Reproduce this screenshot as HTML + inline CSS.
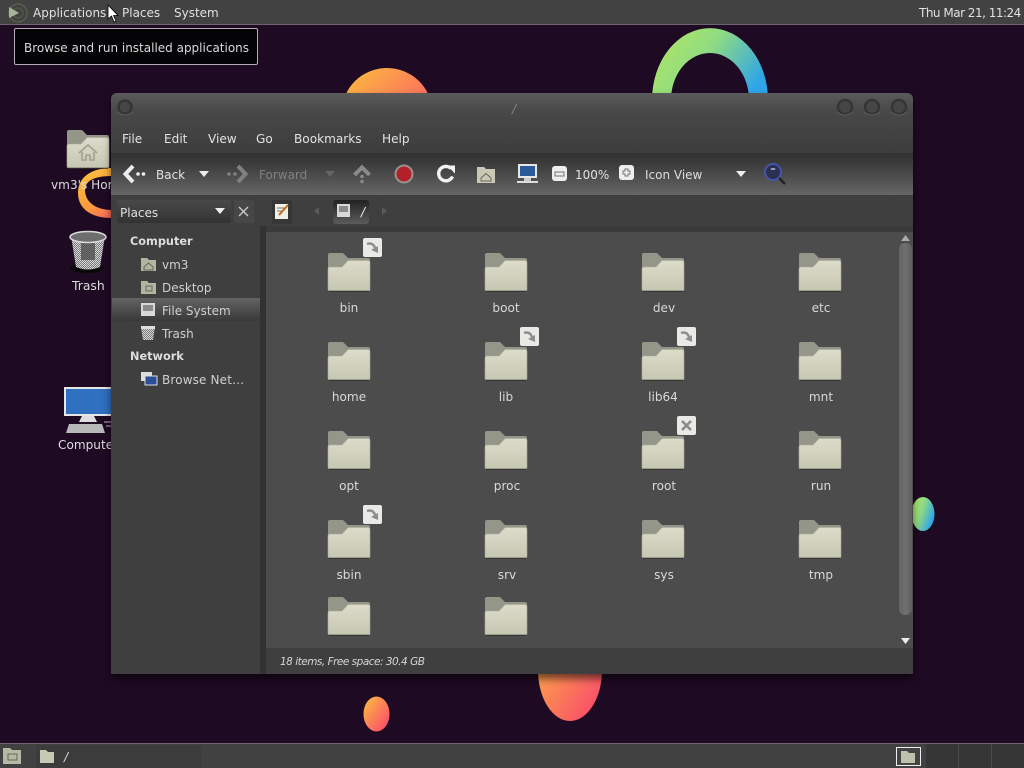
<!DOCTYPE html>
<html><head><meta charset="utf-8">
<style>
html,body{margin:0;padding:0;width:1024px;height:768px;overflow:hidden;background:#1f0a24;font-family:"DejaVu Sans","Liberation Sans",sans-serif;font-size:12px;color:#e0e0e0}
body{filter:blur(.35px)}
.a{position:absolute;white-space:nowrap}
.lb{position:absolute;width:120px;text-align:center;color:#d8d8d8;font-size:12.1px;line-height:16px}
.mn{position:absolute;top:131px;color:#e2e2e2;font-size:12.1px;line-height:16px}
.sd{position:absolute;left:162px;color:#d0d0d0;font-size:12px;line-height:16px}
.tb{position:absolute;top:167px;font-size:12px;line-height:16px;color:#e2e2e2}
</style></head><body>
<svg width="0" height="0" style="position:absolute"><defs>
<linearGradient id="fb" x1="0" y1="0" x2="0" y2="1"><stop offset="0" stop-color="#dddccb"/><stop offset="1" stop-color="#c6c7b2"/></linearGradient>
<symbol id="folder" viewBox="0 0 44 40">
<path d="M1 3Q1 1 3 1H16L21 6H41Q43 6 43 8V17H1Z" fill="#94968a"/>
<path d="M1 17Q1 15 3 15H15L21 8.500H41Q43 8.500 43 10.500V37Q43 39 41 39H3Q1 39 1 37Z" fill="url(#fb)" stroke="#a9aa97" stroke-width=".6"/>
<path d="M2 39.300H42" stroke="#2e2e2a" stroke-width="1"/>
</symbol>
<symbol id="link" viewBox="0 0 19 19"><rect width="19" height="19" rx="2" fill="#e9e9e5"/><path d="M4 6Q10 4 12 10" fill="none" stroke="#8e8e8e" stroke-width="2.400"/><path d="M8 12L15 15L15 8Z" fill="#8e8e8e"/></symbol>
</defs></svg>

<!-- wallpaper -->
<svg class="a" style="left:0;top:0" width="1024" height="768">
<defs>
<linearGradient id="org" x1="0" y1="0" x2="1" y2="1"><stop offset="0" stop-color="#fdc13e"/><stop offset="1" stop-color="#f9406f"/></linearGradient>
<linearGradient id="org2" gradientUnits="userSpaceOnUse" x1="80" y1="170" x2="115" y2="220"><stop offset="0" stop-color="#fcc53c"/><stop offset=".6" stop-color="#fa9a3e"/><stop offset="1" stop-color="#f55a63"/></linearGradient>
<linearGradient id="grn" x1="0" y1="0" x2="1" y2=".5"><stop offset="0" stop-color="#b6e85e"/><stop offset=".5" stop-color="#90db82"/><stop offset="1" stop-color="#2fa5e8"/></linearGradient>
<pattern id="mesh" width="2" height="2" patternUnits="userSpaceOnUse"><rect width="2" height="2" fill="#d6d6d6"/><rect width="1" height="1" fill="#7a7a7a"/><rect x="1" y="1" width="1" height="1" fill="#7a7a7a"/></pattern>
</defs>
<rect width="1024" height="768" fill="#1f0a24"/>
<ellipse cx="387" cy="112" rx="45" ry="44" fill="url(#org)"/>
<path fill-rule="evenodd" d="M652 100A58 72 0 0 1 768 100V110H652ZM671 100V110H749V100A39 47 0 0 0 671 100Z" fill="url(#grn)"/>
<ellipse cx="570" cy="670" rx="32" ry="51" fill="url(#org)"/>
<ellipse cx="376.500" cy="714" rx="13" ry="17.500" fill="url(#org)"/>
<ellipse cx="923" cy="514" rx="11.500" ry="17" fill="url(#grn)"/>
<path fill-rule="evenodd" d="M78 193C78 178 90 168 112 168V218C90 218 78 208 78 193ZM85 190C85 202 96 210 112 210V176C96 176 85 180 85 190Z" fill="url(#org2)"/>
</svg>

<!-- desktop icons -->
<svg class="a" style="left:66px;top:129px" width="44" height="40" viewBox="0 0 44 40"><use href="#folder" width="44" height="40"/><path d="M13 24L22 16L31 24M16 23V31H20V26H24V31H28V23" fill="none" stroke="#a0a18f" stroke-width="1.600"/></svg>
<div class="a" style="left:51px;top:178px;color:#dcdcdc;font-size:12.1px">vm3's Hor</div>
<svg class="a" style="left:68px;top:229px" width="40" height="44" viewBox="0 0 40 44">
<ellipse cx="19" cy="39" rx="17" ry="5" fill="#090909"/><path d="M3 7L8 38Q20 43 32 38L37 7Z" fill="url(#mesh)"/><rect x="13" y="14" width="14" height="17" fill="#4a4a4a" opacity=".75"/><ellipse cx="20" cy="8" rx="18" ry="5.500" fill="#6e6e6e" stroke="#dcdcdc" stroke-width="1.500"/></svg>
<div class="a" style="left:72px;top:278px;color:#dcdcdc;font-size:12.4px">Trash</div>
<svg class="a" style="left:64px;top:387px" width="47" height="47" viewBox="0 0 47 47">
<rect x="0" y="0" width="47" height="29" fill="#e6e6e6"/><rect x="2" y="2" width="45" height="25" fill="#2f70c0"/><path d="M18 29H30L33 35H15Z" fill="#ddd"/><path d="M5 37H38L41 46H2Z" fill="#b8b8b8"/><path d="M40 35H47M42 39H47" stroke="#bbb"/></svg>
<div class="a" style="left:58px;top:438px;color:#dcdcdc;font-size:12.1px">Compute</div>

<!-- top panel -->
<div class="a" style="left:0;top:0;width:1024px;height:24px;background:#424242;border-bottom:1px solid #6d6470"></div>
<svg class="a" style="left:7px;top:2px" width="22" height="21" viewBox="0 0 22 21"><circle cx="11" cy="11" r="9" fill="none" stroke="#55604a" stroke-width="1.500"/><circle cx="11" cy="11" r="5" fill="none" stroke="#55604a"/><path d="M2 5L12 11L2 16Z" fill="#a8b596"/></svg>
<div class="a" style="left:33px;top:5px;font-size:12px;line-height:16px">Applications</div>
<div class="a" style="left:122px;top:5px;font-size:12px;line-height:16px">Places</div>
<div class="a" style="left:174px;top:5px;font-size:12px;line-height:16px">System</div>
<div class="a" style="left:919px;top:5px;font-size:12px;line-height:16px;letter-spacing:-.5px">Thu Mar 21, 11:24</div>
<svg class="a" style="left:107px;top:4px;z-index:9" width="12" height="19" viewBox="0 0 12 19"><path d="M1 1V15L4.500 12L7 18L9 17L6.500 11.500H11Z" fill="#fff" stroke="#000" stroke-width=".8"/></svg>

<!-- tooltip -->
<div class="a" style="left:14px;top:28px;width:242px;height:35px;background:#040305;border:1px solid #b5adb6;border-radius:2px;z-index:8"></div>
<div class="a" style="left:24px;top:40px;font-size:12px;line-height:16px;color:#dadada;z-index:9">Browse and run installed applications</div>

<!-- window shadow + body -->
<div class="a" style="left:111px;top:93px;width:802px;height:581px;background:#3f3f40;border-radius:6px 6px 0 0;box-shadow:0 5px 8px rgba(0,0,0,.55)"></div>
<div class="a" style="left:111px;top:93px;width:802px;height:60px;background:linear-gradient(#5a5a5a,#484848 30%,#3d3d3d);border-radius:6px 6px 0 0"></div>
<svg class="a" style="left:111px;top:93px" width="802" height="30">
<g fill="#464646" stroke="#353535" stroke-width="2.500"><circle cx="14" cy="14" r="6.500"/><circle cx="734" cy="14" r="7"/><circle cx="761" cy="14" r="7"/><circle cx="788" cy="14" r="7"/></g>
<g fill="none" stroke="#5e5e5e"><path d="M6 19Q14 25 22 19M726 19Q734 25 742 19M753 19Q761 25 769 19M780 19Q788 25 796 19"/></g></svg>
<div class="a" style="left:512px;top:102px;font-style:italic;color:#888;font-size:12px">/</div>
<div class="mn" style="left:122px">File</div>
<div class="mn" style="left:164px">Edit</div>
<div class="mn" style="left:208px">View</div>
<div class="mn" style="left:256px">Go</div>
<div class="mn" style="left:294px">Bookmarks</div>
<div class="mn" style="left:382px">Help</div>

<!-- toolbar -->
<div class="a" style="left:111px;top:153px;width:802px;height:42px;background:linear-gradient(#303030,#3e3e3e 30%,#666)"></div>
<svg class="a" style="left:111px;top:153px" width="802" height="42" viewBox="111 153 802 42">
<path d="M133 166L125.500 174L133 182" fill="none" stroke="#eee" stroke-width="4"/><circle cx="138" cy="174" r="1.800" fill="#eee"/><circle cx="143.500" cy="174" r="1.800" fill="#eee"/>
<path d="M199 171H209L204 177Z" fill="#eee"/>
<circle cx="229" cy="174" r="1.800" fill="#808080"/><circle cx="235" cy="174" r="1.800" fill="#808080"/><path d="M238 166L245.500 174L238 182" fill="none" stroke="#808080" stroke-width="4"/>
<path d="M325 171H335L330 177Z" fill="#666"/>
<path d="M354.500 175L362 167.500L369.500 175" fill="none" stroke="#8a8a8a" stroke-width="4"/><circle cx="362" cy="176.500" r="1.800" fill="#8a8a8a"/><circle cx="362" cy="181.500" r="1.800" fill="#8a8a8a"/>
<circle cx="404" cy="174" r="8.500" fill="#b3202a" stroke="#99918c" stroke-width="2"/>
<path d="M451 168.500A7.200 7.200 0 1 0 452.500 176.500" fill="none" stroke="#f2f2f2" stroke-width="3.400"/><path d="M447 165.500H455V173.500Z" fill="#f2f2f2"/>
<path d="M477 167H484L486 169H495V183H477Z" fill="#c8c9b4"/><path d="M481 178L486 173.500L491 178V181H481Z" fill="none" stroke="#66675a"/>
<rect x="518" y="164" width="19" height="14" fill="#e6e6e6"/><rect x="520" y="166" width="15" height="10" fill="#2a5a9a"/><rect x="517" y="181" width="21" height="2" fill="#ddd"/><rect x="524" y="178" width="7" height="3" fill="#ccc"/>
<rect x="552" y="166" width="15" height="15" rx="3" fill="#eee"/><rect x="555" y="172" width="9" height="4" fill="#eee" stroke="#777"/>
<rect x="619" y="165" width="15" height="15" rx="3" fill="#eee"/><path d="M625 169H628V171H630V174H628V176H625V174H623V171H625Z" fill="#eee" stroke="#777"/>
<path d="M736 171H746L741 177Z" fill="#eee"/>
<circle cx="773" cy="172" r="8" fill="#2a3050" stroke="#4454a8" stroke-width="2"/><path d="M779 178L785 184" stroke="#222" stroke-width="2.500"/><ellipse cx="773" cy="169" rx="2.500" ry="1" fill="#9aa0d0"/>
</svg>
<div class="tb" style="left:156px">Back</div>
<div class="tb" style="left:259px;color:#808080">Forward</div>
<div class="tb" style="left:575px">100%</div>
<div class="tb" style="left:645px;color:#dedede">Icon View</div>

<!-- sidebar header -->
<div class="a" style="left:117px;top:200px;width:114px;height:23px;background:linear-gradient(#4a4a4a,#333);border-radius:2px"></div>
<div class="a" style="left:120px;top:205px;font-size:12px;line-height:16px">Places</div>
<svg class="a" style="left:214px;top:207px" width="12" height="8"><path d="M1 1H11L6 7Z" fill="#eee"/></svg>
<div class="a" style="left:234px;top:200px;width:20px;height:23px;background:#474747"></div>
<svg class="a" style="left:238px;top:206px" width="11" height="11"><path d="M1 1L10 10M10 1L1 10" stroke="#ccc" stroke-width="1.300"/></svg>

<!-- path bar -->
<svg class="a" style="left:272px;top:200px" width="120" height="24" viewBox="272 200 120 24">
<rect x="272" y="200" width="20" height="24" fill="#363636"/>
<rect x="275" y="204" width="13" height="15" fill="#f2f0e4"/><path d="M279 215L288 205" stroke="#c26a20" stroke-width="2"/><path d="M277 208H284M277 211H282" stroke="#777"/>
<path d="M319 207V215L314 211Z" fill="#5a5a5a"/><path d="M382 207V215L387 211Z" fill="#5a5a5a"/>
</svg>
<div class="a" style="left:333px;top:200px;width:36px;height:24px;background:linear-gradient(#222,#5c5c5c);border-radius:3px"></div>
<svg class="a" style="left:337px;top:204px" width="14" height="14"><rect x="0" y="0" width="13" height="13" fill="#d8d8d8"/><rect x="2" y="2" width="9" height="6" fill="#8a8a8a"/></svg>
<div class="a" style="left:361px;top:204px;font-size:12px;font-style:italic;line-height:16px;color:#eee">/</div>

<!-- sidebar -->
<div class="a" style="left:112px;top:298px;width:148px;height:23px;background:linear-gradient(#646464,#494949 60%,#3a3a3a)"></div>
<div class="a" style="left:130px;top:234px;font-weight:bold;font-size:11.3px;line-height:16px;color:#ddd">Computer</div>
<div class="a" style="left:130px;top:349px;font-weight:bold;font-size:11.3px;line-height:16px;color:#ddd">Network</div>
<div class="sd" style="top:257px">vm3</div>
<div class="sd" style="top:280px">Desktop</div>
<div class="sd" style="top:303px">File System</div>
<div class="sd" style="top:326px">Trash</div>
<div class="sd" style="top:372px;letter-spacing:.15px">Browse Net…</div>
<svg class="a" style="left:140px;top:256px" width="18" height="134" viewBox="0 0 18 134">
<path d="M1 2H7L9 4H16V15H1Z" fill="#b4b5a0"/><path d="M4 11L8.500 7L13 11V14H4Z" fill="none" stroke="#66675a"/>
<path d="M1 25H7L9 27H16V38H1Z" fill="#b4b5a0"/><rect x="6" y="30" width="6" height="5" fill="none" stroke="#66675a"/>
<rect x="1" y="47" width="14" height="13" fill="#d8d8d8"/><rect x="3" y="49" width="10" height="6" fill="#8b8b8b"/>
<path d="M1 71H15L13 84H3Z" fill="url(#mesh)"/><rect x="1" y="70" width="14" height="3" fill="#ddd"/>
<rect x="1" y="116" width="11" height="9" fill="#ddd"/><rect x="5" y="120" width="12" height="9" fill="#2a4f96" stroke="#ddd"/>
</svg>

<!-- icon view -->
<div class="a" style="left:260px;top:226px;width:6px;height:448px;background:#323232"></div>
<div class="a" style="left:266px;top:232px;width:647px;height:416px;background:#4c4c4c"></div>
<div class="a" style="left:266px;top:226px;width:647px;height:6px;background:#3a3a3a"></div>
<div class="a" style="left:266px;top:648px;width:647px;height:26px;background:#3f3f40"></div>
<div class="a" style="left:280px;top:654px;font-size:10.500px;font-style:italic;line-height:16px;color:#d6d6d6;letter-spacing:-.5px">18 items, Free space: 30.4 GB</div>
<div class="a" style="left:899px;top:243px;width:13px;height:372px;background:linear-gradient(90deg,#656565,#707070,#606060);border-radius:6px"></div>
<svg class="a" style="left:899px;top:233px" width="13" height="414" viewBox="0 0 13 414"><path d="M2 8L6.500 2L11 8Z" fill="#aaa"/><path d="M2 405H11L6.500 411Z" fill="#eee"/></svg>

<svg class="a" style="left:266px;top:232px" width="633" height="416" viewBox="266 232 633 416">
<use href="#folder" x="327" y="252" width="44" height="40"/><use href="#folder" x="484" y="252" width="44" height="40"/><use href="#folder" x="641" y="252" width="44" height="40"/><use href="#folder" x="798" y="252" width="44" height="40"/>
<use href="#folder" x="327" y="341" width="44" height="40"/><use href="#folder" x="484" y="341" width="44" height="40"/><use href="#folder" x="641" y="341" width="44" height="40"/><use href="#folder" x="798" y="341" width="44" height="40"/>
<use href="#folder" x="327" y="430" width="44" height="40"/><use href="#folder" x="484" y="430" width="44" height="40"/><use href="#folder" x="641" y="430" width="44" height="40"/><use href="#folder" x="798" y="430" width="44" height="40"/>
<use href="#folder" x="327" y="519" width="44" height="40"/><use href="#folder" x="484" y="519" width="44" height="40"/><use href="#folder" x="641" y="519" width="44" height="40"/><use href="#folder" x="798" y="519" width="44" height="40"/>
<use href="#folder" x="327" y="596" width="44" height="40"/><use href="#folder" x="484" y="596" width="44" height="40"/>
<use href="#link" x="363" y="238" width="19" height="19"/><use href="#link" x="520" y="327" width="19" height="19"/><use href="#link" x="677" y="327" width="19" height="19"/><use href="#link" x="363" y="505" width="19" height="19"/>
<rect x="677" y="416" width="19" height="19" rx="2" fill="#e9e9e5"/><path d="M682 421L691 430M691 421L682 430" stroke="#8a8a8a" stroke-width="2.600"/>
</svg>

<div class="lb" style="left:289px;top:300px">bin</div><div class="lb" style="left:446px;top:300px">boot</div><div class="lb" style="left:604px;top:300px">dev</div><div class="lb" style="left:761px;top:300px">etc</div>
<div class="lb" style="left:289px;top:389px">home</div><div class="lb" style="left:446px;top:389px">lib</div><div class="lb" style="left:603px;top:389px">lib64</div><div class="lb" style="left:761px;top:389px">mnt</div>
<div class="lb" style="left:289px;top:478px">opt</div><div class="lb" style="left:447px;top:478px">proc</div><div class="lb" style="left:604px;top:478px">root</div><div class="lb" style="left:761px;top:478px">run</div>
<div class="lb" style="left:289px;top:567px">sbin</div><div class="lb" style="left:447px;top:567px">srv</div><div class="lb" style="left:604px;top:567px">sys</div><div class="lb" style="left:761px;top:567px">tmp</div>

<!-- bottom panel -->
<div class="a" style="left:0;top:743px;width:1024px;height:25px;background:#414141;border-top:1px solid #6d6470;box-sizing:border-box"></div>
<div class="a" style="left:36px;top:745px;width:165px;height:23px;background:#3c3c3c"></div>
<svg class="a" style="left:2px;top:747px" width="20" height="18" viewBox="0 0 20 18"><path d="M1 1H8L10 3H19V17H1Z" fill="#b8b9a4"/><rect x="6" y="7" width="9" height="6" fill="none" stroke="#66675a"/></svg>
<svg class="a" style="left:39px;top:749px" width="16" height="15" viewBox="0 0 16 15"><path d="M1 1H7L9 3H15V14H1Z" fill="#c8c9b5"/></svg>
<div class="a" style="left:64px;top:749px;font-style:italic;font-size:12px;line-height:16px;color:#ddd">/</div>
<div class="a" style="left:926px;top:744px;width:98px;height:24px;background:#363636"></div>
<div class="a" style="left:958px;top:744px;width:1px;height:24px;background:#4c4c4c"></div>
<div class="a" style="left:991px;top:744px;width:1px;height:24px;background:#4c4c4c"></div>
<div class="a" style="left:896px;top:747px;width:23px;height:17px;border:1px solid #eee;background:#444"></div>
<svg class="a" style="left:900px;top:750px" width="16" height="14" viewBox="0 0 16 14"><path d="M1 1H7L9 3H15V13H1Z" fill="#c0c1ad"/></svg>
</body></html>
